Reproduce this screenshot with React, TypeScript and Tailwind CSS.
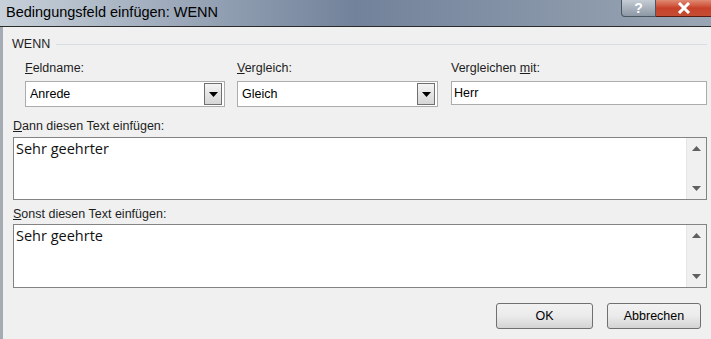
import React from "react";

function Combo({ value, width }: { value: string; width: string }) {
  return (
    <div className={`${width} h-[26px] flex items-center bg-white border border-[#acacac] pl-[4px] pr-[2px]`}>
      <span className="flex-1 text-[12.5px] text-black">{value}</span>
      <div className="w-[18px] h-[22px] border border-[#707070] bg-gradient-to-b from-[#f4f4f4] to-[#d6d6d6] flex items-center justify-center">
        <svg width="9" height="5" viewBox="0 0 9 5">
          <path d="M0 0 H9 L4.5 5 Z" fill="#000" />
        </svg>
      </div>
    </div>
  );
}

function TextBox({ value, height }: { value: string; height: string }) {
  return (
    <div className={`${height} flex bg-white border border-[#838383]`}>
      <div className="flex-1 pl-[2px] pt-[1px] text-[14.5px] text-[#111] font-['Open_Sans',sans-serif] leading-[20px]">
        {value}
      </div>
      <div className="w-[20px] bg-[#f0f0f0] flex flex-col items-center justify-between py-[8px] border-l border-[#e6e6e6]">
        <svg width="9" height="5" viewBox="0 0 9 5">
          <path d="M4.5 0 L9 5 H0 Z" fill="#606060" />
        </svg>
        <svg width="9" height="5" viewBox="0 0 9 5">
          <path d="M0 0 H9 L4.5 5 Z" fill="#606060" />
        </svg>
      </div>
    </div>
  );
}

function Btn({ label, width }: { label: string; width: string }) {
  return (
    <button className={`${width} h-[26px] rounded-[3px] border border-[#707070] bg-gradient-to-b from-[#f2f2f2] via-[#ebebeb] to-[#d4d4d4] text-[12.5px] text-black`}>
      {label}
    </button>
  );
}

export default function App() {
  return (
    <div className="w-[711px] h-[339px] flex flex-col bg-[#f0f0f0] overflow-hidden font-['Liberation_Sans',Arial,sans-serif] text-[#1e1e1e]">
      {/* title bar */}
      <div className="h-[27px] flex items-start bg-gradient-to-r from-[#c8d1da] via-[#72829a] to-[#9aa6b4] border-b border-[#2b2b2b]">
        <div className="flex-1 h-[26px] flex items-center pl-[6px] text-[14.5px] text-black">
          Bedingungsfeld einfügen: WENN
        </div>
        <div className="w-[35px] h-[17px] rounded-bl-[4px] border border-t-0 border-[#4a5562] bg-gradient-to-b from-[#c5ccd4] to-[#8d98a5] flex items-center justify-center text-white text-[14px] font-bold leading-none">
          ?
        </div>
        <div className="w-[55px] h-[17px] border-b border-[#5a1a10] bg-gradient-to-b from-[#e08a72] via-[#c8412a] to-[#c44d33] flex items-center justify-center">
          <svg width="14" height="12" viewBox="0 0 14 12">
            <path d="M2 1 L12 11 M12 1 L2 11" stroke="#fff" strokeWidth="3" />
          </svg>
        </div>
      </div>

      <div className="flex-1 flex">
        <div className="w-[3px] bg-[#a4abb3]" />
        <div className="flex-1 flex flex-col">
          <div className="mt-[10px] h-[14px] flex items-center pl-[9px] pr-[4px]">
            <span className="text-[12.5px]">WENN</span>
            <div className="flex-1 h-px bg-[#d5dfe5] ml-[6px]" />
          </div>

          <div className="mt-[10px] flex pl-[22px] gap-[12px]">
            <div className="flex flex-col gap-[6px]">
              <span className="h-[14px] text-[12.5px] leading-[14px]"><u>F</u>eldname:</span>
              <Combo value="Anrede" width="w-[200px]" />
            </div>
            <div className="flex flex-col gap-[6px]">
              <span className="h-[14px] text-[12.5px] leading-[14px]"><u>V</u>ergleich:</span>
              <Combo value="Gleich" width="w-[201px]" />
            </div>
            <div className="flex flex-col gap-[6px] ml-[1px]">
              <span className="h-[14px] text-[12.5px] leading-[14px]">Vergleichen <u>m</u>it:</span>
              <div className="w-[256px] h-[24px] bg-white border border-[#acacac] pl-[2px] flex items-center text-[12.5px] text-black">
                Herr
              </div>
            </div>
          </div>

          <div className="pl-[10px] pr-[4px] flex flex-col">
            <span className="mt-[12px] h-[14px] text-[12.5px] leading-[14px]"><u>D</u>ann diesen Text einfügen:</span>
            <div className="mt-[4px]">
              <TextBox value="Sehr geehrter" height="h-[63px]" />
            </div>
            <span className="mt-[7px] h-[14px] text-[12.5px] leading-[14px]"><u>S</u>onst diesen Text einfügen:</span>
            <div className="mt-[3px]">
              <TextBox value="Sehr geehrte" height="h-[64px]" />
            </div>
          </div>

          <div className="mt-[15px] flex justify-end gap-[14px] pr-[10px]">
            <Btn label="OK" width="w-[97px]" />
            <Btn label="Abbrechen" width="w-[94px]" />
          </div>
        </div>
      </div>
    </div>
  );
}
